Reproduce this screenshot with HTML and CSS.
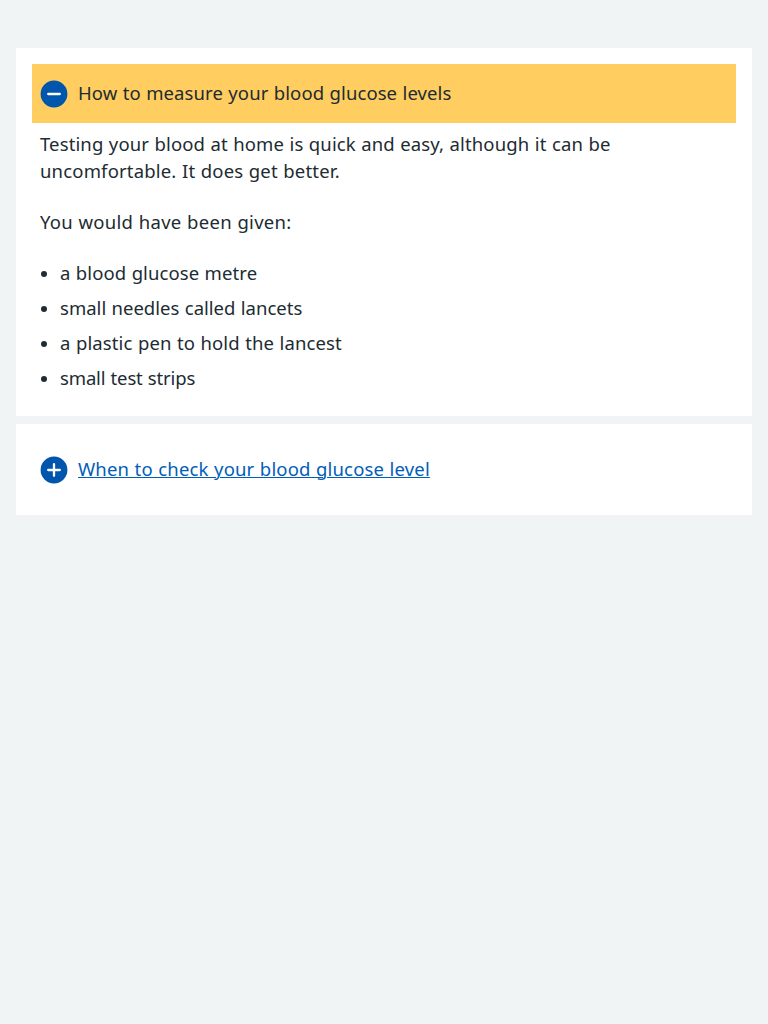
FILE: index.html
```html
<!DOCTYPE html>
<html lang="en">
<head>
<meta charset="utf-8">
<title>Blood glucose levels</title>
<link rel="stylesheet" href="styles.css">
</head>
<body>
<main class="expander-group">
  <section class="expander">
    <div class="summary summary-open">
      <svg class="icon" viewBox="0 0 28 28"><circle cx="14" cy="14" r="13.4"/><path d="M8.2 14H19.8"/></svg>
      <span class="summary-text title-measure">How to measure your blood glucose levels</span>
    </div>
    <div class="content">
      <p><span class="line-intro">Testing your blood at home is quick and easy, although it can be</span><br><span class="line-better">uncomfortable. It does get better.</span></p>
      <p><span class="line-given">You would have been given:</span></p>
      <ul>
        <li><span class="item-metre">a blood glucose metre</span></li>
        <li><span class="item-lancets">small needles called lancets</span></li>
        <li><span class="item-pen">a plastic pen to hold the lancest</span></li>
        <li><span class="item-strips">small test strips</span></li>
      </ul>
    </div>
  </section>
  <section class="expander">
    <div class="summary">
      <svg class="icon" viewBox="0 0 28 28"><circle cx="14" cy="14" r="13.4"/><path d="M8.2 14H19.8M14 8.2V19.8"/></svg>
      <a class="summary-text summary-link title-when">When to check your blood glucose level</a>
    </div>
  </section>
</main>
</body>
</html>
```
FILE: styles.css
```css
* { box-sizing: border-box; }
body {
  margin: 0;
  background: #f0f4f5;
  color: #212b32;
  font: 18.5px/27px "Noto Sans", "Open Sans", sans-serif;
  word-spacing: 0.5px;
}
.expander-group {
  display: flex;
  flex-direction: column;
  gap: 8px;
  padding: 48px 16px;
}
.expander { background: #fff; padding: 16px; }
.summary {
  display: flex;
  align-items: flex-start;
  gap: 10px;
  height: 59px;
  padding: 15px 8px 0;
}
.summary-open { background: #ffcd60; }
.icon { width: 28px; height: 28px; flex: none; margin-top: 1px; }
.icon circle { fill: #0056ac; }
.icon path { fill: none; stroke: #fff; stroke-width: 2.3; stroke-linecap: round; }
.summary-link {
  color: #005eb8;
  text-decoration: underline;
  text-decoration-thickness: 1px;
  text-underline-offset: 1px;
}
.content { padding: 7px 8px 1px; }
.content p { margin: 0 0 24px; }
.content ul { margin: 0; padding: 0; list-style: none; }
.content li {
  display: flex;
  align-items: center;
  gap: 13px;
  margin-bottom: 8px;
  padding-left: 1px;
}
.content li::before {
  content: "";
  width: 6px;
  height: 6px;
  margin-top: 2px;
  border-radius: 50%;
  background: #212b32;
}
.title-measure { letter-spacing: 0.09px; }
.title-when { letter-spacing: 0.16px; }
.line-intro { letter-spacing: 0.125px; }
.line-better { letter-spacing: 0.175px; }
.line-given { letter-spacing: 0.27px; }
.item-metre { letter-spacing: 0.09px; }
.item-lancets { letter-spacing: 0.02px; }
.item-pen { letter-spacing: 0.12px; }
.item-strips { letter-spacing: -0.14px; }
```
